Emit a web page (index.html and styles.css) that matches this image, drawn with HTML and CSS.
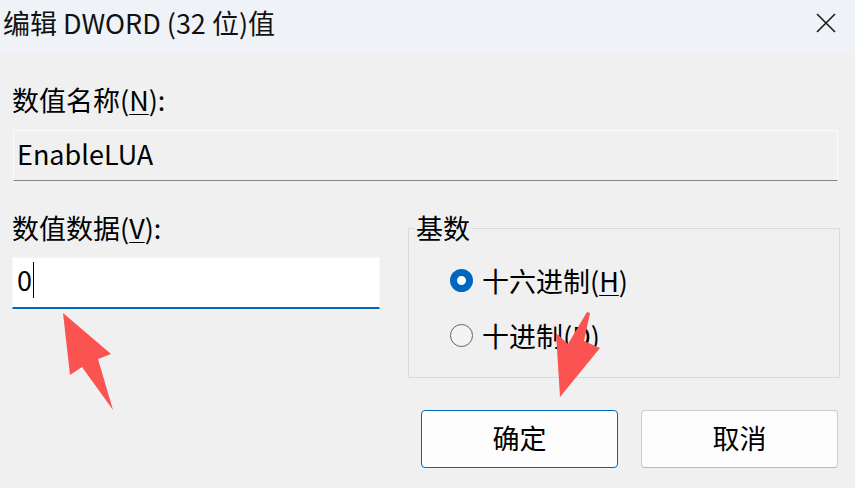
FILE: index.html
```html
<!DOCTYPE html>
<html lang="zh-CN">
<head>
<meta charset="utf-8">
<title>编辑 DWORD (32 位)值</title>
<link rel="stylesheet" href="styles.css">
</head>
<body>
<div class="window">
  <div class="titlebar">
    <span class="title">编辑 DWORD (32 位)值</span>
    <svg class="close" width="20" height="20" viewBox="0 0 20 20"><path d="M1 1 L19 19 M19 1 L1 19" stroke="#1a1a1a" stroke-width="1.6" fill="none"/></svg>
  </div>
  <div class="content">
    <div class="label name-label">数值名称(<u>N</u>):</div>
    <div class="field field-name">EnableLUA</div>
    <div class="row">
      <div class="col-data">
        <div class="label">数值数据(<u>V</u>):</div>
        <div class="field field-data">0<span class="caret"></span></div>
      </div>
      <fieldset class="base">
        <legend>基数</legend>
        <div class="radio-row first"><span class="radio checked"></span>十六进制(<u>H</u>)</div>
        <div class="radio-row"><span class="radio"></span>十进制(<u>D</u>)</div>
      </fieldset>
    </div>
    <div class="buttons">
      <button class="btn primary">确定</button>
      <button class="btn">取消</button>
    </div>
  </div>
  <svg class="arrows" width="855" height="488" viewBox="0 0 855 488">
    <polygon points="63,313 111,354 98,359 113,410 82,367 70,375" fill="#fb5252"/>
    <polygon points="587,312 568,344 556,333 560,397 600,348 584,341 590,313" fill="#fb5252"/>
  </svg>
</div>
</body>
</html>
```

FILE: styles.css
```css
* { box-sizing: border-box; }
html, body { margin: 0; padding: 0; }
body {
  width: 855px;
  height: 488px;
  overflow: hidden;
  background: #f0f0f0;
  font-family: "Noto Sans CJK SC", "Noto Sans", sans-serif;
  color: #000;
}
.window {
  position: relative;
  width: 855px;
  height: 488px;
  background: #f0f0f0;
}
.titlebar {
  height: 54px;
  background: #eff3f8;
  display: flex;
  align-items: center;
  justify-content: space-between;
  padding: 0 19px 10px 3px;
}
.title {
  font-size: 27px;
  color: #111;
}
.close { display: block; margin-top: 2px; }
.content {
  padding: 30px 15px 0 12px;
}
.label {
  font-size: 27px;
  line-height: 32px;
  height: 32px;
}
u { text-decoration-thickness: 1px; text-underline-offset: 3px; }
.field {
  font-size: 27px;
  display: flex;
  align-items: center;
}
.field-name {
  margin-top: 14px;
  margin-left: 1px;
  margin-right: 2px;
  height: 51px;
  padding: 0 0 4px 3px;
  background: #f0f0f0;
  border: 1px solid #fbfbfb;
  border-bottom: 1px solid #858585;
}
.row {
  display: flex;
  gap: 28px;
  margin-top: 31px;
}
.col-data { width: 368px; }
.field-data {
  margin-top: 13px;
  height: 52px;
  background: #fff;
  border: 1px solid #f6f6f6;
  border-bottom: 2px solid #0067c0;
  padding: 0 0 6px 4px;
}
.caret {
  display: inline-block;
  width: 1px;
  height: 36px;
  background: #000;
  margin-left: 1px;
}
.base {
  width: 432px;
  height: 166px;
  margin: 0;
  padding: 0 0 0 41px;
  border: 1px solid #dadada;
}
.base legend {
  font-size: 27px;
  line-height: 32px;
  padding: 0 1px;
  margin-left: -35px;
  margin-top: -3px;
}
.radio-row {
  display: flex;
  align-items: center;
  height: 40px;
  font-size: 27px;
  margin-top: 15px;
}
.radio-row.first { margin-top: 16px; }
.radio {
  width: 23px;
  height: 23px;
  border-radius: 50%;
  border: 1px solid #626262;
  background: #f4f4f4;
  margin-right: 9px;
  flex: none;
}
.radio.checked {
  border: 7px solid #0067c0;
  background: #fff;
}
.buttons {
  display: flex;
  justify-content: flex-end;
  gap: 23px;
  margin-top: 32px;
  padding-right: 2px;
}
.btn {
  width: 197px;
  height: 58px;
  font-family: inherit;
  font-size: 27px;
  color: #000;
  background: #fdfdfd;
  border: 1px solid #cccccc;
  border-bottom-color: #b9b9b9;
  border-radius: 4px;
  padding: 0 0 4px 0;
}
.btn.primary {
  border: 1px solid #0067c0;
}
.arrows {
  position: absolute;
  left: 0;
  top: 0;
  pointer-events: none;
}
```
